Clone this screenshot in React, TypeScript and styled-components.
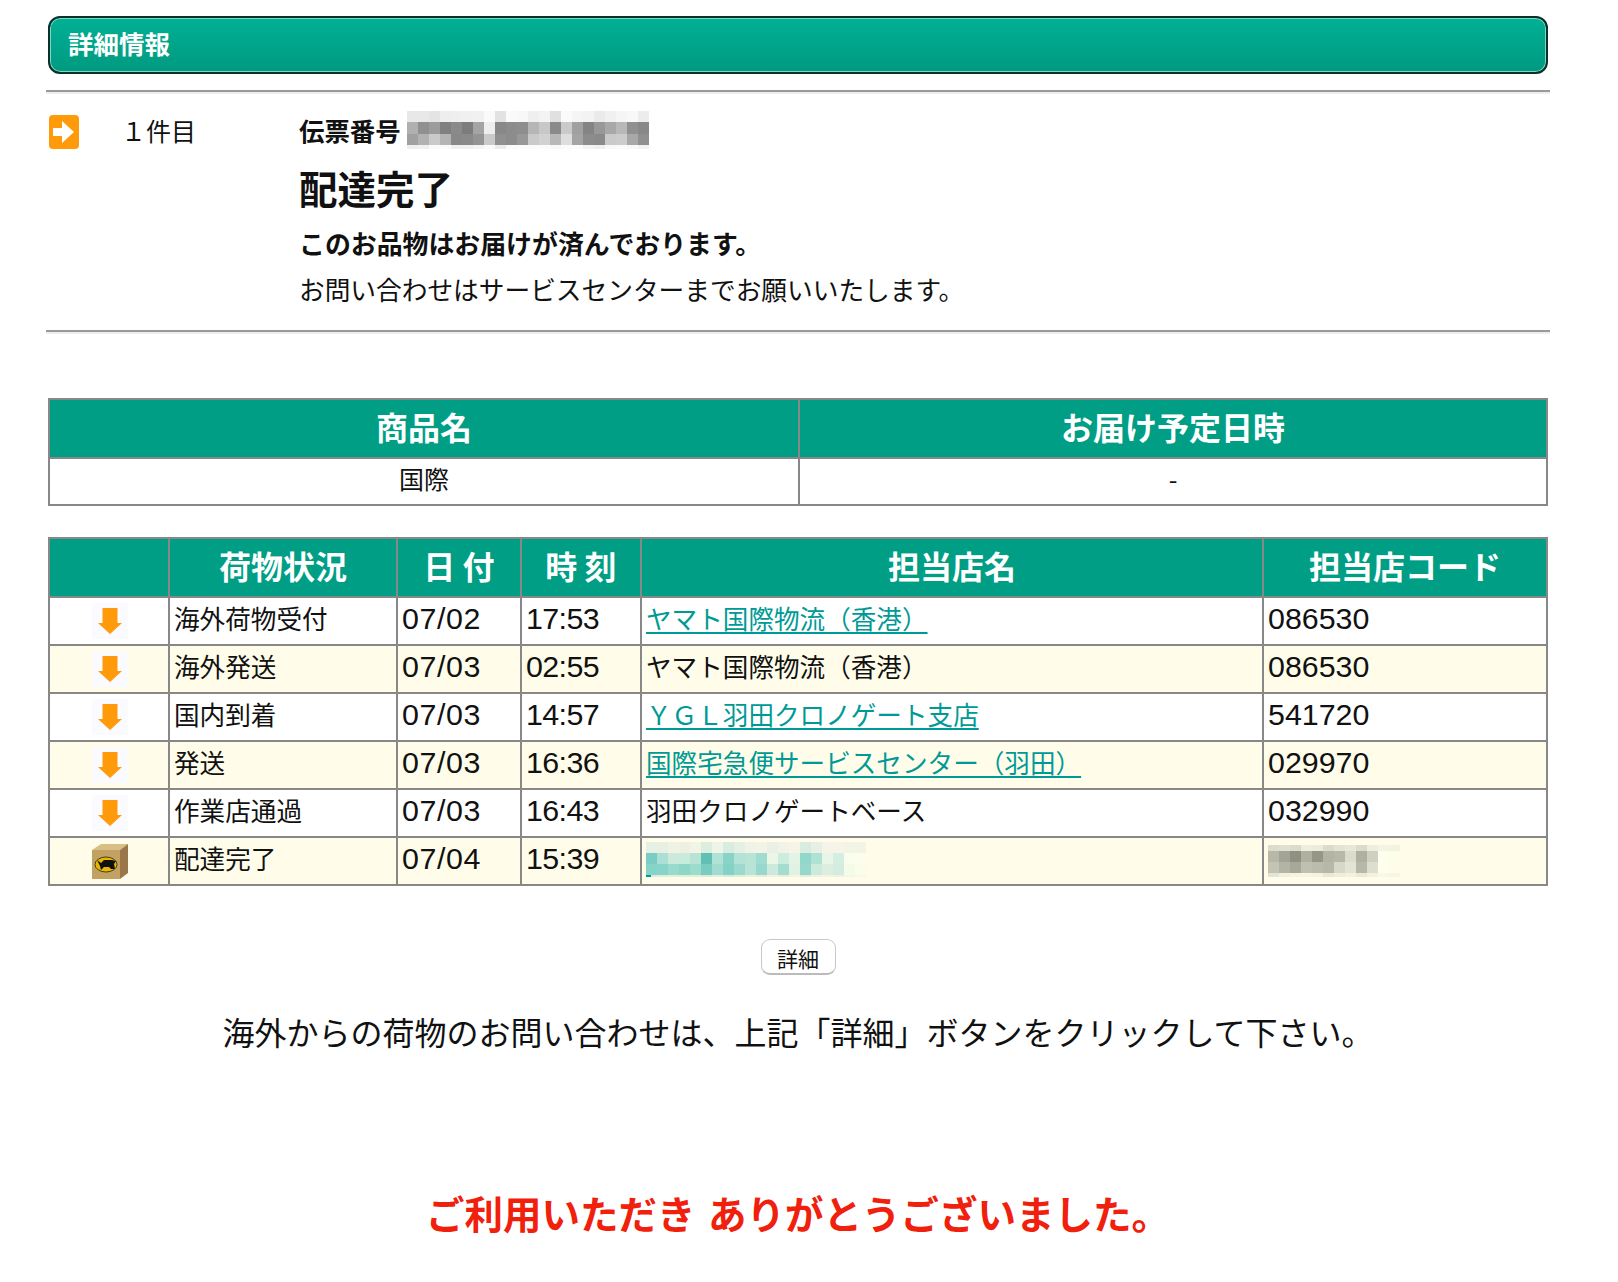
import React from 'react';
import styled, { createGlobalStyle } from 'styled-components';

const GlobalStyle = createGlobalStyle`
    body {
        margin: 0;
        background: #fff;
        color: #111;
        font-family: "Noto Sans CJK JP", "Liberation Sans", sans-serif;
    }
`;

const Page = styled.div`
    width: 1500px;
    margin-left: 48px;
    padding-top: 16px;
    padding-bottom: 46px;
`;

const TitleBar = styled.div`
    box-sizing: border-box;
    height: 58px;
    padding: 0 0 4px 18px;
    display: flex;
    align-items: center;
    border: 2px solid #0b2f29;
    border-radius: 12px;
    background: linear-gradient(#00b094, #009a80);
    box-shadow: inset 0 0 0 1px #7fd6c4;
    color: #fff;
    font-size: 25.500px;
    font-weight: 700;
    line-height: 1;
`;

const Rule = styled.div<{ $top: number }>`
    height: 2px;
    margin: ${(p) => p.$top}px -2px 0;
    background: #999;
    border-bottom: 2px solid #eee;
`;

const Summary = styled.div`
    display: grid;
    grid-template-columns: 73px 178px 1fr;
    height: 236px;
`;

const ArrowIcon = styled.svg`
    display: block;
    width: 30px;
    height: 34px;
    margin: 21px 0 0 1px;
`;

const CountText = styled.div`
    margin-top: 18px;
    font-size: 25px;
    line-height: 36px;
`;

const Message = styled.div`
    display: flex;
    flex-direction: column;
    padding-top: 14px;
`;

const SlipRow = styled.div`
    display: flex;
    align-items: center;
    gap: 6px;
    height: 44px;
    font-size: 25.400px;
    font-weight: 700;
`;

const StatusTitle = styled.div`
    margin-top: 7px;
    font-size: 38.500px;
    font-weight: 700;
    line-height: 56px;
`;

const StatusBold = styled.div`
    margin-top: 10px;
    font-size: 25.900px;
    font-weight: 700;
    line-height: 36px;
`;

const StatusNote = styled.div`
    margin-top: 10px;
    font-size: 25.700px;
    line-height: 36px;
`;

const Table = styled.table<{ $top: number }>`
    width: 1498px;
    margin-top: ${(p) => p.$top}px;
    border-collapse: collapse;
    table-layout: fixed;
    border: 2px solid #888;
`;

const Col = styled.col<{ $width: number }>`
    width: ${(p) => p.$width}px;
`;

const HeadCell = styled.th`
    height: 52px;
    padding: 0 0 5px;
    border: 2px solid #888;
    background: #009e85;
    color: #fff;
    font-size: 32px;
    font-weight: 700;
    line-height: 1;
    text-align: center;
`;

const Row = styled.tr<{ $alt?: boolean }>`
    height: 48px;
    background: ${(p) => (p.$alt ? '#fffdea' : '#fff')};
`;

const Cell = styled.td`
    padding: 0 0 6px 4px;
    border: 2px solid #888;
    font-size: 25.600px;
    line-height: 1;
    white-space: nowrap;
`;

const IconCell = styled.td`
    padding: 0 0 0 2px;
    border: 2px solid #888;
    text-align: center;
    line-height: 0;
`;

const PlainCell = styled.td`
    height: 39px;
    padding: 0 0 6px;
    border: 2px solid #888;
    font-size: 25px;
    line-height: 1;
    text-align: center;
`;

const Digits = styled.span<{ $spacing?: number }>`
    font-family: "Liberation Sans", sans-serif;
    font-size: 30.400px;
    letter-spacing: ${(p) => p.$spacing ?? 0}px;
    vertical-align: -2px;
`;

const StoreLink = styled.a`
    color: #009a96;
    text-decoration: underline;
    text-underline-offset: 3px;
`;

const StateIcon = styled.svg`
    width: 36px;
    height: 36px;
    vertical-align: middle;
`;

const Mosaic = styled.svg<{ $top?: number }>`
    display: block;
    flex: none;
    margin-top: ${(p) => p.$top ?? 0}px;
    filter: blur(0.5px);
`;

const DetailBar = styled.div`
    display: flex;
    justify-content: center;
    margin-top: 53px;
`;

const DetailButton = styled.button`
    box-sizing: border-box;
    width: 75px;
    height: 36px;
    padding: 4px 0 0;
    border: 1px solid #c8c8c8;
    border-bottom: 2px solid #bbb;
    border-radius: 9px;
    background: #fff;
    color: #111;
    font-family: inherit;
    font-size: 21px;
    line-height: 1;
`;

const Notice = styled.div`
    margin-top: 32px;
    font-size: 32px;
    line-height: 48px;
    text-align: center;
`;

const Thanks = styled.div`
    margin-top: 129px;
    color: #f0200c;
    font-size: 38.500px;
    font-weight: 700;
    line-height: 56px;
    text-align: center;
    word-spacing: 4px;
`;

function DownArrow() {
    return (
        <StateIcon viewBox="0 0 36 36">
            <rect width="36" height="36" fill="#fafaff" />
            <path d="M10.500 5 H25.500 V20 H30 L18 31 L6 20 H10.500 Z" fill="#ff9a0a" />
        </StateIcon>
    );
}

function ParcelBox() {
    return (
        <StateIcon viewBox="0 0 36 36">
            <path d="M0 7 L9 1 H36 L28 7 Z" fill="#d9bf85" />
            <path d="M0 7 H28 V36 H0 Z" fill="#c2a263" />
            <path d="M28 7 L36 1 V30 L28 36 Z" fill="#99774a" />
            <ellipse cx="14" cy="21.500" rx="11" ry="7.500" fill="#e8b800" stroke="#4a3a10" strokeWidth="1" />
            <path d="M5 17 L9 20 L12 17 H20 L24 18 L22 21 L23 26 H19 L17 24 H12 L9 27 L8 23 Z" fill="#111" />
        </StateIcon>
    );
}

function PixelBlock({ rows, heights, cell, lead, top }: { rows: string[][]; heights: number[]; cell: number; lead?: boolean; top?: number }) {
    const width = rows[0].length * cell;
    const height = heights.reduce((a, b) => a + b, 0);
    let y = 0;
    return (
        <Mosaic $top={top} width={width} height={height} viewBox={`0 0 ${width} ${height}`}>
            {rows.map((row, r) => {
                const start = y;
                y += heights[r];
                return row.map((color, c) => (
                    <rect key={`${r}-${c}`} x={c * cell} y={start} width={cell} height={heights[r]} fill={`#${color}`} />
                ));
            })}
            {lead && <rect x="0" y={height - 2} width="5" height="2" fill="#009a96" />}
        </Mosaic>
    );
}

const slipPixels = [
    ['e8e8e8', 'e8e8e8', 'e4e4e4', 'eeeeee', 'efefef', 'f0f0f0', 'f1f1f1', 'fafafa', 'e2e2e2', 'fafafa', 'f8f8f8', 'efefef', 'f3f3f3', 'e0e0e0', 'fafafa', 'f5f5f5', 'f3f3f3', 'eaeaea', 'f0f0f0', 'f5f5f5', 'f8f8f8', 'ececec'],
    ['b0b0b0', '909090', '9c9c9c', '808080', '8a8a8a', '7c7c7c', 'a4a4a4', 'eeeeee', '888888', '8c8c8c', '8e8e8e', 'b6b6b6', 'c8c8c8', '8a8a8a', 'cacaca', 'a0a0a0', '848484', '989898', 'a8a8a8', 'b8b8b8', '909090', '888888'],
    ['a0a0a0', 'b2b2b2', 'cacaca', 'b4b4b4', '888888', '8a8a8a', '949494', 'cacaca', '909090', '8c8c8c', '989898', 'cacaca', 'd2d2d2', 'b8b8b8', 'dedede', 'a4a4a4', '8c8c8c', '8a8a8a', 'cacaca', 'cccccc', 'a8a8a8', '909090'],
    ['eeeeee', 'f0f0f0', 'fafafa', 'fafafa', 'f0f0f0', 'f0f0f0', 'f4f4f4', 'fafafa', 'ececec', 'fbfbfb', 'fbfbfb', 'fbfbfb', 'fbfbfb', 'f8f8f8', 'fbfbfb', 'fbfbfb', 'f4f4f4', 'f0f0f0', 'f8f8f8', 'fafafa', 'f8f8f8', 'f2f2f2'],
];

const storePixels = [
    ['e6f0e4', 'e8f0e2', 'f0f2e4', 'eef0e2', 'f2f4e6', 'dceee0', 'f0f4e6', 'd8ece0', 'e4f0e4', 'f0f4e6', 'f4f4e6', 'eaf0e4', 'f2f2e6', 'f6f4e6', 'd8ece0', 'e6f0e4', 'f6f4e6', 'f6f4e6', 'f2f4e4', 'f2f4e4'],
    ['7accc4', 'acdfd5', 'cce9dc', 'c8ecdc', 'b8e4d8', '60c0b4', 'b0e2d6', '88d4c8', 'b4e2d6', 'b8e4d8', 'a0dccf', 'ecf6e6', 'ccecdf', 'e2f4e6', '90d8cc', 'b0e2d4', 'e8f6ea', 'd4eee2', 'f8fdee', 'fcfdec'],
    ['84d4c8', '88d4c8', '98dacc', '90d6c8', '9cdccc', '78ccc0', 'a0dccf', '84d2c6', '9cdad0', 'b8e4d8', '98d8cc', 'cceadc', 'a4dcd0', 'e0f2e4', '98d8cc', 'cceadc', 'dceee0', 'd4ecdf', 'f4fbe6', 'fafdea'],
    ['e0eadc', 'e4ecdc', 'e8ecdc', 'e8ecdc', 'e8ecdc', 'dceadc', 'e8ecdc', 'dceadc', 'e4ecdc', 'ecf0e0', 'e8ecdc', 'f0f2e4', 'eceee0', 'f4f4e6', 'e8ecdc', 'f0f2e4', 'f4f4e6', 'f2f2e4', 'f6f6e6', 'f8f8e8'],
];

const codePixels = [
    ['dcdccc', 'e0e0d0', 'dcdccc', 'eeeede', 'ecebdc', 'dcdccc', 'e4e4d4', 'e8e8d8', 'dcdccc', 'eeeede', 'f4f4e4', 'f2f3e2'],
    ['b8b8a8', 'a4a496', '909082', 'b0b0a0', '969688', 'b4b4a4', 'b8b8a8', 'dcdccc', 'b0b0a0', 'd0d0c0', 'fefeee', 'fefee8'],
    ['c4c4b4', 'b4b4a4', 'a8a898', 'c0c0b0', 'bcbcac', 'b8b8a8', 'd8d8c8', 'e4e4d4', 'b8b8a8', 'dedece', 'fefeee', 'fefee8'],
    ['e4e4d4', 'f0f0e0', 'f4f4e4', 'f6f6e6', 'f4f4e4', 'e8e8d8', 'eeeede', 'f2f2e2', 'eaeada', 'f2f2e2', 'f8f8e8', 'f6f6e6'],
];

const history = [
    { status: '海外荷物受付', date: '07/02', time: '17:53', store: 'ヤマト国際物流（香港）', link: true, code: '086530' },
    { status: '海外発送', date: '07/03', time: '02:55', store: 'ヤマト国際物流（香港）', link: false, code: '086530' },
    { status: '国内到着', date: '07/03', time: '14:57', store: 'ＹＧＬ羽田クロノゲート支店', link: true, code: '541720' },
    { status: '発送', date: '07/03', time: '16:36', store: '国際宅急便サービスセンター（羽田）', link: true, code: '029970' },
    { status: '作業店通過', date: '07/03', time: '16:43', store: '羽田クロノゲートベース', link: false, code: '032990' },
];

function App() {
    return (
        <Page>
            <GlobalStyle />
            <TitleBar>詳細情報</TitleBar>
            <Rule $top={16} />
            <Summary>
                <ArrowIcon viewBox="0 0 30 34">
                    <rect width="30" height="34" rx="4" fill="#ff9a0a" />
                    <path d="M4 13 H13 V6 L25 17 L13 28 V21 H4 Z" fill="#fff" />
                </ArrowIcon>
                <CountText>１件目</CountText>
                <Message>
                    <SlipRow>
                        伝票番号
                        <PixelBlock rows={slipPixels} heights={[11, 12, 11, 4]} cell={11} />
                    </SlipRow>
                    <StatusTitle>配達完了</StatusTitle>
                    <StatusBold>このお品物はお届けが済んでおります。</StatusBold>
                    <StatusNote>お問い合わせはサービスセンターまでお願いいたします。</StatusNote>
                </Message>
            </Summary>
            <Rule $top={0} />

            <Table $top={64}>
                <colgroup>
                    <Col $width={750} />
                    <Col $width={748} />
                </colgroup>
                <thead>
                    <tr>
                        <HeadCell>商品名</HeadCell>
                        <HeadCell>お届け予定日時</HeadCell>
                    </tr>
                </thead>
                <tbody>
                    <tr>
                        <PlainCell>国際</PlainCell>
                        <PlainCell>-</PlainCell>
                    </tr>
                </tbody>
            </Table>

            <Table $top={31}>
                <colgroup>
                    <Col $width={120} />
                    <Col $width={228} />
                    <Col $width={124} />
                    <Col $width={120} />
                    <Col $width={622} />
                    <Col $width={284} />
                </colgroup>
                <thead>
                    <tr>
                        <HeadCell />
                        <HeadCell>荷物状況</HeadCell>
                        <HeadCell>日 付</HeadCell>
                        <HeadCell>時 刻</HeadCell>
                        <HeadCell>担当店名</HeadCell>
                        <HeadCell>担当店コード</HeadCell>
                    </tr>
                </thead>
                <tbody>
                    {history.map((item, i) => (
                        <Row key={item.status} $alt={i % 2 === 1}>
                            <IconCell><DownArrow /></IconCell>
                            <Cell>{item.status}</Cell>
                            <Cell><Digits $spacing={0.6}>{item.date}</Digits></Cell>
                            <Cell><Digits $spacing={-0.6}>{item.time}</Digits></Cell>
                            <Cell>{item.link ? <StoreLink href="#">{item.store}</StoreLink> : item.store}</Cell>
                            <Cell><Digits>{item.code}</Digits></Cell>
                        </Row>
                    ))}
                    <Row $alt>
                        <IconCell><ParcelBox /></IconCell>
                        <Cell>配達完了</Cell>
                        <Cell><Digits $spacing={0.6}>07/04</Digits></Cell>
                        <Cell><Digits $spacing={-0.6}>15:39</Digits></Cell>
                        <Cell><PixelBlock rows={storePixels} heights={[11, 11, 11, 2]} cell={11} lead top={2} /></Cell>
                        <Cell><PixelBlock rows={codePixels} heights={[6, 11, 11, 4]} cell={11} top={5} /></Cell>
                    </Row>
                </tbody>
            </Table>

            <DetailBar>
                <DetailButton>詳細</DetailButton>
            </DetailBar>
            <Notice>海外からの荷物のお問い合わせは、上記「詳細」ボタンをクリックして下さい。</Notice>
            <Thanks>ご利用いただき ありがとうございました。</Thanks>
        </Page>
    );
}

export default App;
